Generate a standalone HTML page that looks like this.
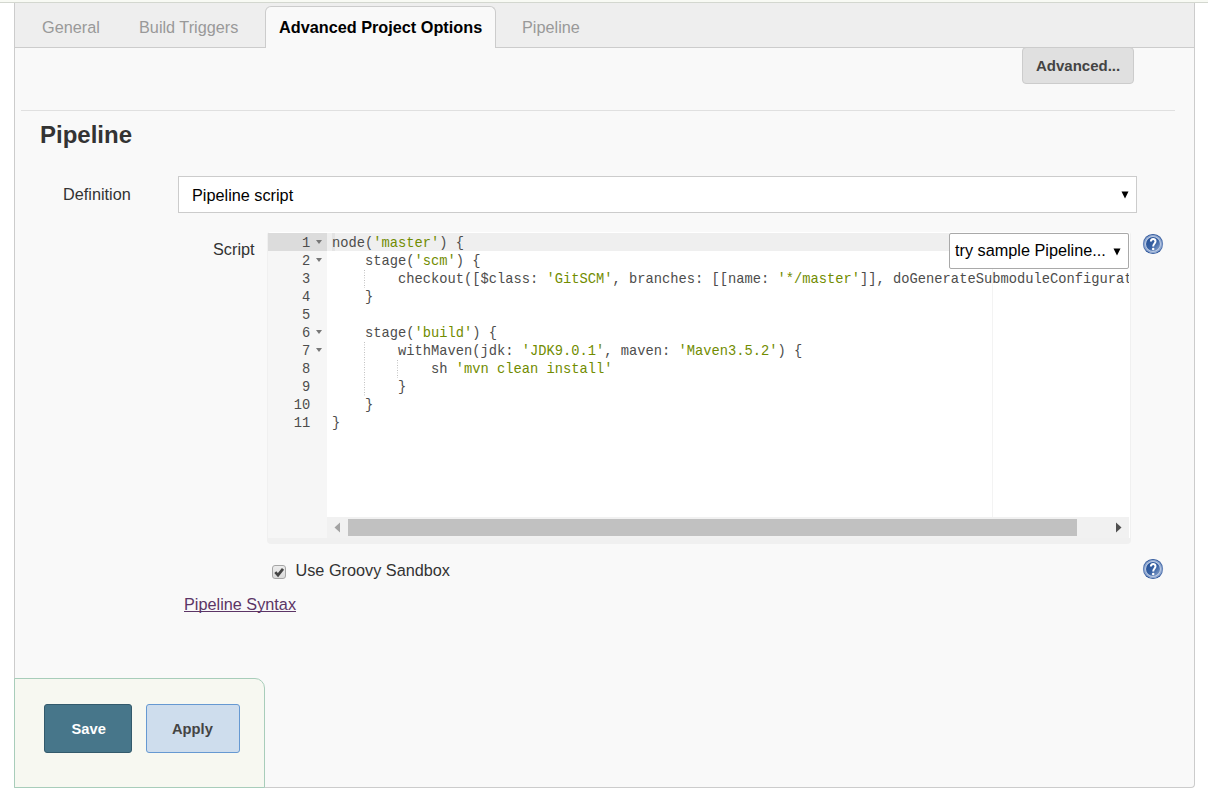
<!DOCTYPE html>
<html>
<head>
<meta charset="utf-8">
<title>Pipeline Config</title>
<style>
*{box-sizing:border-box;margin:0;padding:0}
html,body{width:1208px;height:803px;overflow:hidden;background:#fff}
body{position:relative;font-family:"Liberation Sans",sans-serif;font-size:16.25px;color:#333}
.abs{position:absolute}
.t{position:absolute;white-space:nowrap;line-height:20px;height:20px}
#topstrip{left:0;top:0;width:1208px;height:2px;background:#f8faf4}
#topline{left:0;top:2px;width:1208px;height:1px;background:#d3d7cf}
#panel{left:14px;top:3px;width:1181px;height:785px;background:#f9f9f9;border-left:1px solid #ccc;border-right:1px solid #ccc;border-bottom:1px solid #ccc;border-radius:0 0 4px 0}
#tabbar{left:15px;top:3px;width:1179px;height:45px;background:#eee;border-bottom:1px solid #ccc}
#activetab{left:265px;top:6px;width:231px;height:42px;background:#f9f9f9;border:1px solid #ccc;border-bottom:none;border-radius:6px 6px 0 0}
.tab{color:#999}
#advbtn{left:1022px;top:47px;width:112px;height:37px;background:#e0e0e0;border:1px solid #ccc;border-radius:4px}
#hr{left:21px;top:110px;width:1154px;height:1px;background:#e0e0e0}
#select{left:178px;top:176px;width:959px;height:37px;background:#fff;border:1px solid #ccc}
#wrap{left:267px;top:232px;width:864px;height:312px;background:#f0f0f0;border-radius:3px 3px 4px 4px}
#wrapw{left:268px;top:232px;width:862px;height:306px;background:#fff;border-radius:2px 2px 0 0}
#editor{left:268px;top:233px;width:861px;height:305px;background:#fff;overflow:hidden}
#gutter{left:0;top:0;width:59px;height:305px;background:#f6f6f6}
#gactive{left:0;top:0;width:59px;height:18px;background:#dcdcdc}
#lactive{left:59px;top:0;width:802px;height:18px;background:#efefef}
#pm{left:724px;top:0;width:1px;height:284px;background:#f3f3f3}
.ln{position:absolute;left:0;width:42.3px;margin-top:2px;text-align:right;height:18px;line-height:18px;font-family:"Liberation Mono",monospace;font-size:13.75px;color:#4d4d4c;white-space:pre}
.cl{position:absolute;left:64px;margin-top:2px;height:18px;line-height:18px;font-family:"Liberation Mono",monospace;font-size:13.75px;color:#4d4d4c;white-space:pre}
.s{color:#718c00}
.fold{position:absolute;left:48px;width:0;height:0;border-left:3.5px solid transparent;border-right:3.5px solid transparent;border-top:4px solid #777}
.ig{position:absolute;width:1px;margin-top:1px;background-image:linear-gradient(#b9b9b9 50%,transparent 50%);background-size:1px 2.5px}
#hsb{left:59px;top:284px;width:802px;height:21px;background:#f1f1f1}
#thumb{left:21px;top:2px;width:729px;height:17px;background:#c1c1c1}
#sample{left:949px;top:233px;width:180px;height:36px;background:#fff;border:1px solid #a9a9a9;border-radius:2px}
#sticker{left:14px;top:678px;width:251px;height:110px;background:#f7f8f1;border:1px solid #a8cdba;border-radius:0 10px 0 0}
#save{left:44px;top:704px;width:88px;height:49px;background:#47768a;border:1px solid #335a6c;border-radius:3px}
#apply{left:146px;top:704px;width:94px;height:49px;background:#cedded;border:1px solid #6699d2;border-radius:3px}
#cb{left:272px;top:565px;width:14px;height:14px;border:1px solid #a5a5a5;border-radius:3px;background:linear-gradient(#ececec,#dadada)}
</style>
</head>
<body>
<div class="abs" id="topstrip"></div>
<div class="abs" id="topline"></div>
<div class="abs" id="panel"></div>
<div class="abs" id="tabbar"></div>
<div class="abs" id="activetab"></div>
<div class="t tab" style="left:42px;top:17px">General</div>
<div class="t tab" style="left:139px;top:17px">Build Triggers</div>
<div class="t" style="left:279px;top:17px;font-weight:bold;color:#000">Advanced Project Options</div>
<div class="t tab" style="left:522px;top:17px">Pipeline</div>

<div class="abs" id="advbtn"></div>
<div class="t" style="left:1036px;top:56px;font-weight:bold;font-size:15px;color:#444">Advanced...</div>
<div class="abs" id="hr"></div>

<div class="t" style="left:40px;top:120px;font-weight:bold;font-size:24px;line-height:30px;height:30px;color:#333">Pipeline</div>
<div class="t" style="left:63px;top:184px">Definition</div>
<div class="abs" id="select"></div>
<div class="t" style="left:192px;top:185px;color:#000">Pipeline script</div>
<svg class="abs" style="left:1120.5px;top:190.5px" width="8" height="8" viewBox="0 0 8 8"><path d="M0.5 0.5 L7.5 0.5 L4 7.5 Z" fill="#000"/></svg>

<div class="t" style="left:213px;top:239px">Script</div>
<div class="abs" id="wrap"></div>
<div class="abs" id="wrapw"></div>
<div class="abs" id="editor">
  <div class="abs" id="gutter"></div>
  <div class="abs" id="gactive"></div>
  <div class="abs" id="lactive"></div>
  <div class="abs" id="pm"></div>
  <div class="abs" style="left:64px;top:0;width:3px;height:18px;background:#e4e4e4"></div>
  <div class="ln" style="top:0">1</div><div class="fold" style="top:7px"></div>
  <div class="ln" style="top:18px">2</div><div class="fold" style="top:25px"></div>
  <div class="ln" style="top:36px">3</div>
  <div class="ln" style="top:54px">4</div>
  <div class="ln" style="top:72px">5</div>
  <div class="ln" style="top:90px">6</div><div class="fold" style="top:97px"></div>
  <div class="ln" style="top:108px">7</div><div class="fold" style="top:115px"></div>
  <div class="ln" style="top:126px">8</div>
  <div class="ln" style="top:144px">9</div>
  <div class="ln" style="top:162px">10</div>
  <div class="ln" style="top:180px">11</div>
  <div class="cl" style="top:0">node(<span class="s">'master'</span>) {</div>
  <div class="cl" style="top:18px">    stage(<span class="s">'scm'</span>) {</div>
  <div class="cl" style="top:36px">        checkout([$class: <span class="s">'GitSCM'</span>, branches: [[name: <span class="s">'*/master'</span>]], doGenerateSubmoduleConfigurations</div>
  <div class="cl" style="top:54px">    }</div>
  <div class="cl" style="top:90px">    stage(<span class="s">'build'</span>) {</div>
  <div class="cl" style="top:108px">        withMaven(jdk: <span class="s">'JDK9.0.1'</span>, maven: <span class="s">'Maven3.5.2'</span>) {</div>
  <div class="cl" style="top:126px">            sh <span class="s">'mvn clean install'</span></div>
  <div class="cl" style="top:144px">        }</div>
  <div class="cl" style="top:162px">    }</div>
  <div class="cl" style="top:180px">}</div>
  <div class="ig" style="left:96px;top:36px;height:18px"></div>
  <div class="ig" style="left:96px;top:108px;height:54px"></div>
  <div class="ig" style="left:129px;top:126px;height:18px"></div>
  <div class="abs" id="hsb">
    <div class="abs" id="thumb"></div>
    <svg class="abs" style="left:7px;top:5px" width="7" height="11" viewBox="0 0 7 11"><path d="M6 0.5 L6 10.5 L0.5 5.5 Z" fill="#a3a3a3"/></svg>
    <svg class="abs" style="left:788px;top:5px" width="7" height="11" viewBox="0 0 7 11"><path d="M1 0.5 L1 10.5 L6.5 5.5 Z" fill="#505050"/></svg>
  </div>
</div>
<div class="abs" id="sample"></div>
<div class="t" style="left:955px;top:240px;color:#000">try sample Pipeline...</div>
<svg class="abs" style="left:1112.5px;top:247.5px" width="8" height="8" viewBox="0 0 8 8"><path d="M0.5 0.5 L7.5 0.5 L4 7.5 Z" fill="#000"/></svg>

<svg class="abs" id="help1" style="left:1142px;top:233px" width="22" height="22" viewBox="0 0 22 22">
<defs><linearGradient id="ro1" x1="0" y1="0" x2="0" y2="1"><stop offset="0" stop-color="#1f4a92"/><stop offset="0.5" stop-color="#6584ba"/><stop offset="1" stop-color="#1f4a92"/></linearGradient><linearGradient id="hg1" x1="0.2" y1="0.2" x2="0.9" y2="0.9"><stop offset="0" stop-color="#2a559a"/><stop offset="0.5" stop-color="#3862a4"/><stop offset="1" stop-color="#7f9ac6"/></linearGradient></defs>
  <circle cx="11" cy="11" r="10.1" fill="url(#ro1)"/>
  <circle cx="11" cy="11" r="9.2" fill="#8ea6cf"/>
  <circle cx="11" cy="11" r="7.8" fill="#c9d6ea"/>
  <circle cx="11" cy="11" r="7" fill="url(#hg1)"/>
  <path d="M8.9 8.6 C8.9 5.3 13.5 5.3 13.5 8.3 C13.5 10.6 11.2 10.7 11.2 13.4" fill="none" stroke="#fff" stroke-width="2"/>
  <circle cx="11.2" cy="15.9" r="1.25" fill="#fff"/>
</svg>
<svg class="abs" id="help2" style="left:1142px;top:558px" width="22" height="22" viewBox="0 0 22 22">
<defs><linearGradient id="ro2" x1="0" y1="0" x2="0" y2="1"><stop offset="0" stop-color="#1f4a92"/><stop offset="0.5" stop-color="#6584ba"/><stop offset="1" stop-color="#1f4a92"/></linearGradient><linearGradient id="hg2" x1="0.2" y1="0.2" x2="0.9" y2="0.9"><stop offset="0" stop-color="#2a559a"/><stop offset="0.5" stop-color="#3862a4"/><stop offset="1" stop-color="#7f9ac6"/></linearGradient></defs>
  <circle cx="11" cy="11" r="10.1" fill="url(#ro2)"/>
  <circle cx="11" cy="11" r="9.2" fill="#8ea6cf"/>
  <circle cx="11" cy="11" r="7.8" fill="#c9d6ea"/>
  <circle cx="11" cy="11" r="7" fill="url(#hg2)"/>
  <path d="M8.9 8.6 C8.9 5.3 13.5 5.3 13.5 8.3 C13.5 10.6 11.2 10.7 11.2 13.4" fill="none" stroke="#fff" stroke-width="2"/>
  <circle cx="11.2" cy="15.9" r="1.25" fill="#fff"/>
</svg>

<div class="abs" id="cb"></div>
<svg class="abs" style="left:273px;top:566px" width="12" height="12" viewBox="0 0 12 12"><path d="M2.3 6.2 L5 9.2 L10 2.8" stroke="#444" stroke-width="2.7" fill="none"/></svg>
<div class="t" style="left:295.5px;top:560px">Use Groovy Sandbox</div>
<div class="t" style="left:184px;top:594px;color:#5c3566;text-decoration:underline;text-decoration-skip-ink:none">Pipeline Syntax</div>

<div class="abs" id="sticker"></div>
<div class="abs" id="save"></div>
<div class="t" style="left:71.5px;top:719px;font-weight:bold;font-size:14.7px;color:#fff">Save</div>
<div class="abs" id="apply"></div>
<div class="t" style="left:172px;top:719px;font-weight:bold;font-size:14.7px;color:#444">Apply</div>
</body>
</html>
